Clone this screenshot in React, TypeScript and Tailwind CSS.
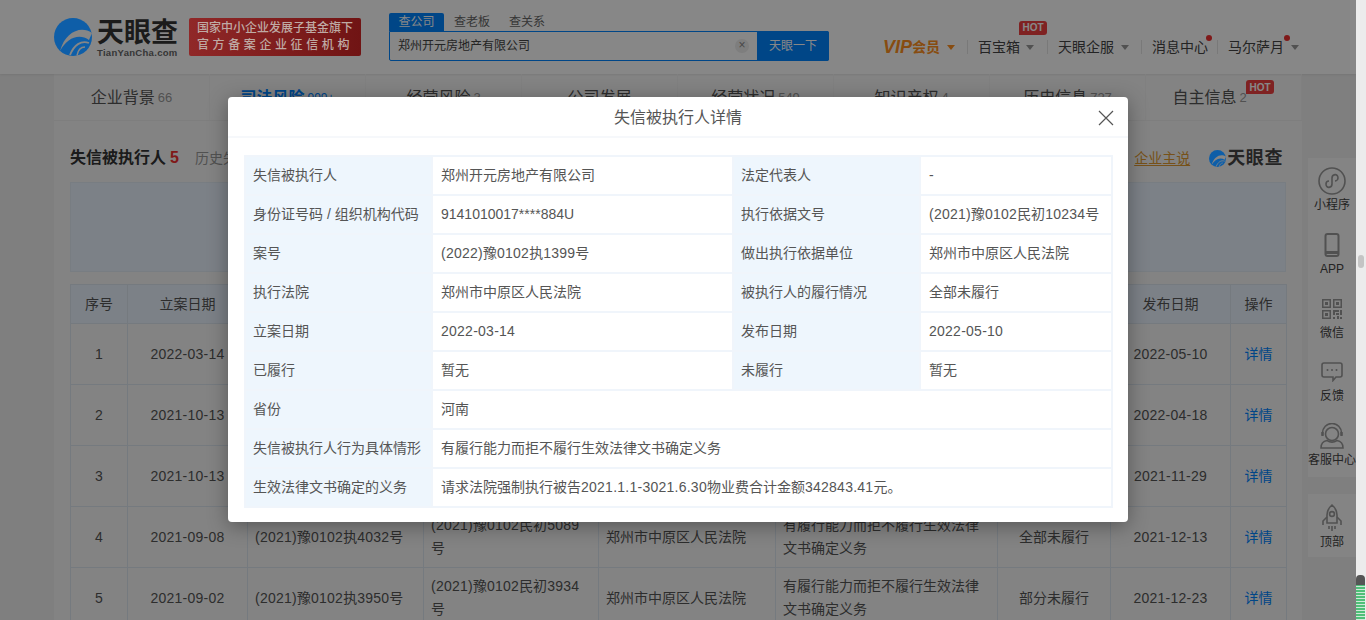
import React from 'react'

const dataRows = [
    { no: 1, date: '2022-03-14', caseNo: '(2022)豫0102执1399号', basis: '(2021)豫0102民初10234号', state: '全部未履行', pub: '2022-05-10' },
    { no: 2, date: '2021-10-13', caseNo: '(2021)豫0102执3211号', basis: '(2021)豫0102民初5090号', state: '全部未履行', pub: '2022-04-18' },
    { no: 3, date: '2021-10-13', caseNo: '(2021)豫0102执3210号', basis: '(2021)豫0102民初5091号', state: '全部未履行', pub: '2021-11-29' },
    { no: 4, date: '2021-09-08', caseNo: '(2021)豫0102执4032号', basis: '(2021)豫0102民初5089号', state: '全部未履行', pub: '2021-12-13' },
    { no: 5, date: '2021-09-02', caseNo: '(2021)豫0102执3950号', basis: '(2021)豫0102民初3934号', state: '部分未履行', pub: '2021-12-23' },
]

const tabs = [
    { label: '企业背景', count: '66' },
    { label: '司法风险', count: '999+', active: true },
    { label: '经营风险', count: '3' },
    { label: '公司发展', count: '' },
    { label: '经营状况', count: '549' },
    { label: '知识产权', count: '4' },
    { label: '历史信息', count: '727' },
    { label: '自主信息', count: '2', hot: true },
]

// digits sit slightly wider than the CJK around them
const Num = ({ text }: { text: string }) => (
    <>
        {text.split(/([\d().\-]+)/).map((part, i) =>
            i % 2 ? <span key={i} className="tracking-[0.25px]">{part}</span> : part
        )}
    </>
)

const Caret = () => (
    <span className="inline-block w-0 h-0 border-x-[4px] border-t-[5px] border-x-transparent border-t-[#999]" />
)

const Hot = ({ className }: { className: string }) => (
    <span className={`absolute flex items-center justify-center w-[28px] h-[14px] bg-[#f04040] text-white text-[10px] font-bold rounded-t-[3px] rounded-br-[3px] ${className}`}>HOT</span>
)

// the brand mark stays above the scrim, its colours are already the dimmed ones
const LogoMark = ({ size }: { size: number }) => (
    <svg width={size} height={size} viewBox="0 0 38 38" className="flex-none relative z-10">
        <circle cx="19" cy="19" r="19" fill="#0e5ea8" />
        <path d="M38 15C27 7 11 14 6 33C13 20 25 15 35 22Z" fill="#868686" />
        <path d="M35 25C27 22 20 27 16 37" fill="none" stroke="#868686" strokeWidth="1.800" />
        <path d="M31 29C27 29 24 32 23 37.500" fill="none" stroke="#868686" strokeWidth="1.500" />
    </svg>
)

const SideIcon = ({ name }: { name: string }) => {
    const common = { fill: 'none', stroke: '#999', strokeWidth: 1.6 }
    if (name === 'mini') return (
        <svg width="28" height="28" viewBox="0 0 28 28" {...common}>
            <circle cx="14" cy="14" r="13" />
            <path d="M8 17c0 5 6 4 6 0v-6c0-4 6-5 6 0 0 2-2 3-3 3M11 14c-2 0-3 1-3 3" />
        </svg>
    )
    if (name === 'app') return (
        <svg width="16" height="24" viewBox="0 0 16 24" {...common}>
            <rect x="1.500" y="1" width="13" height="22" rx="2" strokeWidth="2" />
            <path d="M2 19.500h12" strokeWidth="3" />
        </svg>
    )
    if (name === 'qr') return (
        <svg width="22" height="22" viewBox="0 0 22 22" fill="#999">
            <path d="M1 1h9v9H1zM2.500 2.500v6h6v-6zM12 1h9v9h-9zM13.500 2.500v6h6v-6zM1 12h9v9H1zM2.500 13.500v6h6v-6z" fillRule="evenodd" />
            <path d="M4 4h3v3H4zM15 4h3v3h-3zM4 15h3v3H4zM12 12h6v2h-4v3h-2zM19 12h2v5h-2zM15 15h3v2h-3zM12 19h2v2h-2zM16 18h2v3h-2zM19 19h2v2h-2z" />
        </svg>
    )
    if (name === 'chat') return (
        <svg width="22" height="20" viewBox="0 0 22 20" {...common}>
            <path d="M3 1h16a2 2 0 0 1 2 2v10a2 2 0 0 1-2 2h-4l-3 3.500V15H3a2 2 0 0 1-2-2V3a2 2 0 0 1 2-2z" />
            <circle cx="6.500" cy="8" r="1" fill="#999" stroke="none" />
            <circle cx="11" cy="8" r="1" fill="#999" stroke="none" />
            <circle cx="15.500" cy="8" r="1" fill="#999" stroke="none" />
        </svg>
    )
    if (name === 'service') return (
        <svg width="26" height="26" viewBox="0 0 26 26" {...common}>
            <circle cx="13" cy="11" r="6.500" />
            <path d="M3.500 12V10a9.500 9.500 0 0 1 19 0v2" />
            <path d="M3.500 9v4M22.500 9v4" strokeWidth="2.400" />
            <path d="M2 25c0-5 3-7 6-7.500 3 2 7 2 10 0 3 .5 6 2.500 6 7.500z" />
        </svg>
    )
    return (
        <svg width="22" height="28" viewBox="0 0 22 28" {...common}>
            <path d="M11 1c3 2.500 5 6 5 10v8H6v-8c0-4 2-7.500 5-10z" />
            <circle cx="11" cy="10" r="2.400" />
            <path d="M6 13l-4 4v4M16 13l4 4v4M8 22v3M11 22v5M14 22v3" />
        </svg>
    )
}

const SideItem = ({ icon, label, className }: { icon: string; label: string; className: string }) => (
    <div className={`flex flex-col items-center ${className}`}>
        <div className="h-[30px] flex items-center justify-center"><SideIcon name={icon} /></div>
        <span className="text-[12px] leading-[18px] text-[#444] whitespace-nowrap">{label}</span>
    </div>
)

const detailRows = [
    ['失信被执行人', '郑州开元房地产有限公司', '法定代表人', '-'],
    ['身份证号码 / 组织机构代码', '9141010017****884U', '执行依据文号', '(2021)豫0102民初10234号'],
    ['案号', '(2022)豫0102执1399号', '做出执行依据单位', '郑州市中原区人民法院'],
    ['执行法院', '郑州市中原区人民法院', '被执行人的履行情况', '全部未履行'],
    ['立案日期', '2022-03-14', '发布日期', '2022-05-10'],
    ['已履行', '暂无', '未履行', '暂无'],
]

const detailWide = [
    ['省份', '河南'],
    ['失信被执行人行为具体情形', '有履行能力而拒不履行生效法律文书确定义务'],
    ['生效法律文书确定的义务', '请求法院强制执行被告2021.1.1-3021.6.30物业费合计金额342843.41元。'],
]

const labelCell = 'border-2 border-[#f0f5fb] bg-[#eef6fd] pl-[7px] h-[39px]'
const valueCell = 'border-2 border-[#f0f5fb] bg-white pl-[8px] h-[39px]'

const Header = () => (
    <header className="h-[74px] bg-white flex items-start pl-[54px] shadow-[0_1px_2px_rgba(0,0,0,0.08)] relative">
        <div className="w-[135px] flex-none flex items-start gap-[5px] pt-[18px]">
            <LogoMark size={38} />
            <div className="flex flex-col pt-[1px]">
                <span className="text-[27px] leading-[28px] font-bold text-[#333]">天眼查</span>
                <span className="text-[9.500px] leading-[11px] font-bold text-[#666] tracking-[0.3px] whitespace-nowrap">TianYanCha.com</span>
            </div>
        </div>
        <div className="relative z-10 mt-[18px] w-[172px] h-[38px] pt-[2px] flex-none rounded-[2px] bg-gradient-to-r from-[#902828] to-[#701414] text-[#bfaaa4] text-[12px] leading-[17px] font-medium text-center whitespace-nowrap">
            <div>国家中小企业发展子基金旗下</div>
            <div className="tracking-[3.600px]">官方备案企业征信机构</div>
        </div>
        <div className="ml-[28px] mt-[13px] w-[440px] flex-none">
            <div className="flex h-[18px] text-[12px] leading-[18px] text-[#666]">
                <span className="w-[55px] text-center bg-[#0084ff] text-white rounded-t-[2px]">查公司</span>
                <span className="ml-[10px]">查老板</span>
                <span className="ml-[19px]">查关系</span>
            </div>
            <div className="h-[30px] flex border border-[#0084ff] rounded-b-[2px] rounded-tr-[2px] bg-white">
                <span className="flex-1 pl-2 text-[12px] leading-[29px] text-[#444]">郑州开元房地产有限公司</span>
                <span className="w-[14px] h-[14px] mt-[7px] mr-[8px] rounded-full bg-[#eee] text-[#888] text-[12px] leading-[13px] text-center">×</span>
                <span className="w-[72px] -my-px -mr-px bg-[#0084ff] text-white text-[12px] leading-[30px] text-center rounded-r-[2px]">天眼一下</span>
            </div>
        </div>
        <nav className="ml-[54px] mt-[38px] h-[18px] flex items-center text-[14px] text-[#444] whitespace-nowrap">
            <span className="italic font-bold text-[18px] text-[#ff9020]">VIP</span>
            <span className="font-bold text-[#ff9020]">会员</span>
            <span className="ml-[7px] inline-block w-0 h-0 border-x-[4px] border-t-[5px] border-x-transparent border-t-[#ff9020]" />
            <span className="w-px h-[14px] bg-[#e5e5e5] ml-[12px] mr-[10px]" />
            <span className="relative">百宝箱<Hot className="-top-[16px] left-[41px]" /></span>
            <span className="ml-[6px] flex"><Caret /></span>
            <span className="w-px h-[14px] bg-[#e5e5e5] ml-[13px] mr-[10px]" />
            <span>天眼企服</span>
            <span className="ml-[7px] flex"><Caret /></span>
            <span className="w-px h-[14px] bg-[#e5e5e5] ml-[12px] mr-[10px]" />
            <span className="relative">消息中心<i className="absolute -right-[4px] top-[-2px] w-[6px] h-[6px] rounded-full bg-[#f03030]" /></span>
            <span className="w-px h-[14px] bg-[#e5e5e5] ml-[9px] mr-[10px]" />
            <span className="relative">马尔萨月<i className="absolute -right-[6px] top-[-2px] w-[6px] h-[6px] rounded-full bg-[#f03030]" /></span>
            <span className="ml-[7px] flex"><Caret /></span>
        </nav>
    </header>
)

const TabBar = () => (
    <div className="grid grid-cols-8 h-[47px] border-b border-[#eee]">
        {tabs.map(t => (
            <div key={t.label} className={`relative flex items-center justify-center gap-[3px] border-r border-[#f2f2f2] pt-[1px] ${t.hot ? 'pr-[28px]' : ''}`}>
                <span className={t.active ? 'text-[16px] font-bold text-[#0084ff]' : 'text-[16px] text-[#555]'}>{t.label}</span>
                {!!t.count && <span className={t.active ? 'text-[12px] text-[#0084ff]' : 'text-[13px] text-[#999]'}>{t.count}</span>}
                {t.hot && <Hot className="top-[6px] right-[27px]" />}
            </div>
        ))}
    </div>
)

const DataTable = () => (
    <table className="table-fixed border-collapse w-[1216px] text-[14px] text-[#555]">
        <colgroup>
            <col className="w-[57px]" />
            <col className="w-[120px]" />
            <col className="w-[176px]" />
            <col className="w-[175px]" />
            <col className="w-[177px]" />
            <col className="w-[222px]" />
            <col className="w-[113px]" />
            <col className="w-[120px]" />
            <col className="w-[56px]" />
        </colgroup>
        <thead>
            <tr className="h-[39px] bg-[#eaf4ff]">
                {['序号', '立案日期', '案号', '执行依据文号', '做出执行依据单位', '失信被执行人行为具体情形', '履行情况', '发布日期', '操作'].map(h => (
                    <th key={h} className="border border-[#dde7f0] font-normal text-center">{h}</th>
                ))}
            </tr>
        </thead>
        <tbody>
            {dataRows.map(r => (
                <tr key={r.no} className="h-[61px]">
                    <td className="border border-[#dde7f0] text-center">{r.no}</td>
                    <td className="border border-[#dde7f0] text-center"><Num text={r.date} /></td>
                    <td className="border border-[#dde7f0] pl-[7px] pr-2"><Num text={r.caseNo} /></td>
                    <td className="border border-[#dde7f0] pl-[7px] pr-2 leading-[23px]"><Num text={r.basis} /></td>
                    <td className="border border-[#dde7f0] pl-[7px] pr-2">郑州市中原区人民法院</td>
                    <td className="border border-[#dde7f0] pl-[7px] pr-2 leading-[23px]">有履行能力而拒不履行生效法律文书确定义务</td>
                    <td className="border border-[#dde7f0] text-center">{r.state}</td>
                    <td className="border border-[#dde7f0] text-center"><Num text={r.pub} /></td>
                    <td className="border border-[#dde7f0] text-center text-[#0084ff]">详情</td>
                </tr>
            ))}
        </tbody>
    </table>
)

const DetailModal = () => (
    <div className="absolute z-20 left-[228px] top-[97px] w-[900px] h-[425px] bg-white rounded-[4px] shadow-[0_4px_20px_rgba(0,0,0,0.35)]">
        <div className="h-[41px] pt-[3px] relative flex items-center justify-center border-b-2 border-[#f6f8fb] text-[16px] text-[#555]">
            失信被执行人详情
            <svg width="16" height="16" viewBox="0 0 16 16" className="absolute right-[14px] top-[13px]" stroke="#555" strokeWidth="1.200" fill="none">
                <path d="M1 1l14 14M15 1L1 15" />
            </svg>
        </div>
        <table className="table-fixed border-collapse w-[867px] mx-[16px] mt-[17px] text-[14px] text-[#555]">
            <colgroup>
                <col className="w-[187px]" />
                <col className="w-[301px]" />
                <col className="w-[187px]" />
                <col className="w-[192px]" />
            </colgroup>
            <tbody>
                {detailRows.map(r => (
                    <tr key={r[0]}>
                        <td className={labelCell}>{r[0]}</td>
                        <td className={valueCell}>{r[1].includes('*') ? r[1] : <Num text={r[1]} />}</td>
                        <td className={labelCell}>{r[2]}</td>
                        <td className={valueCell}><Num text={r[3]} /></td>
                    </tr>
                ))}
                {detailWide.map(r => (
                    <tr key={r[0]}>
                        <td className={labelCell}>{r[0]}</td>
                        <td className={valueCell} colSpan={3}><Num text={r[1]} /></td>
                    </tr>
                ))}
            </tbody>
        </table>
    </div>
)

const App = () => {
    return (
        <div className="flex w-[1366px] h-[620px] overflow-hidden [font-family:'Liberation_Sans','Noto_Sans_CJK_SC',sans-serif]">
            <div className="relative w-[1356px] h-[620px] flex-none overflow-hidden bg-[#f0f0f0]">
                <Header />
                <div className="flex">
                    <main className="ml-[54px] w-[1248px] flex-none bg-[#f8f8f8]">
                        <TabBar />
                        <section className="px-[16px]">
                            <div className="h-[61px] pt-[13px] flex items-center justify-between">
                                <div className="flex items-center">
                                    <span className="text-[16px] font-bold text-[#333]">失信被执行人</span>
                                    <span className="ml-[4px] text-[16px] font-bold text-[#f03030]">5</span>
                                    <span className="ml-[16px] text-[14px] text-[#999]">历史失信被执行人 0</span>
                                </div>
                                <div className="flex items-center mr-[3px]">
                                    <span className="text-[14px] text-[#e09a30] underline underline-offset-2">企业主说</span>
                                    <span className="ml-[19px] flex items-center gap-[1px]">
                                        <LogoMark size={17} />
                                        <span className="text-[18px] leading-[20px] font-bold text-[#444] tracking-[0.6px]">天眼查</span>
                                    </span>
                                </div>
                            </div>
                            <div className="h-[90px] bg-[#eaf4ff] border border-[#e3edf6]" />
                            <div className="mt-[12px]"><DataTable /></div>
                        </section>
                    </main>
                    <aside className="ml-[6px] mt-[84px] w-[48px] flex-none">
                        <div className="h-[319px] bg-[#f9f9f9] pt-[8px]">
                            <SideItem icon="mini" label="小程序" className="h-[64px]" />
                            <SideItem icon="app" label="APP" className="h-[64px]" />
                            <SideItem icon="qr" label="微信" className="h-[63px]" />
                            <SideItem icon="chat" label="反馈" className="h-[64px]" />
                            <SideItem icon="service" label="客服中心" className="h-[56px]" />
                        </div>
                        <div className="mt-[17px] h-[63px] bg-[#f9f9f9] pt-[9px]">
                            <SideItem icon="rocket" label="顶部" className="h-[54px]" />
                        </div>
                    </aside>
                </div>
                <div className="absolute inset-0 bg-black/[0.47]" />
                <DetailModal />
            </div>
            <div className="w-[10px] flex-none bg-[#ececec] flex flex-col items-center">
                <div className="mt-[255px] w-[6px] h-[13px] rounded-[3px] bg-[#c4c4c4]" />
                <div className="mt-[307px] w-[9px] h-[45px] -ml-px rounded-t-[4px] bg-[linear-gradient(#555_0,#555_10px,transparent_10px),repeating-linear-gradient(#4fbf78_0,#4fbf78_2px,#cfe8d8_2px,#cfe8d8_3px)]" />
            </div>
        </div>
    )
}

export default App
